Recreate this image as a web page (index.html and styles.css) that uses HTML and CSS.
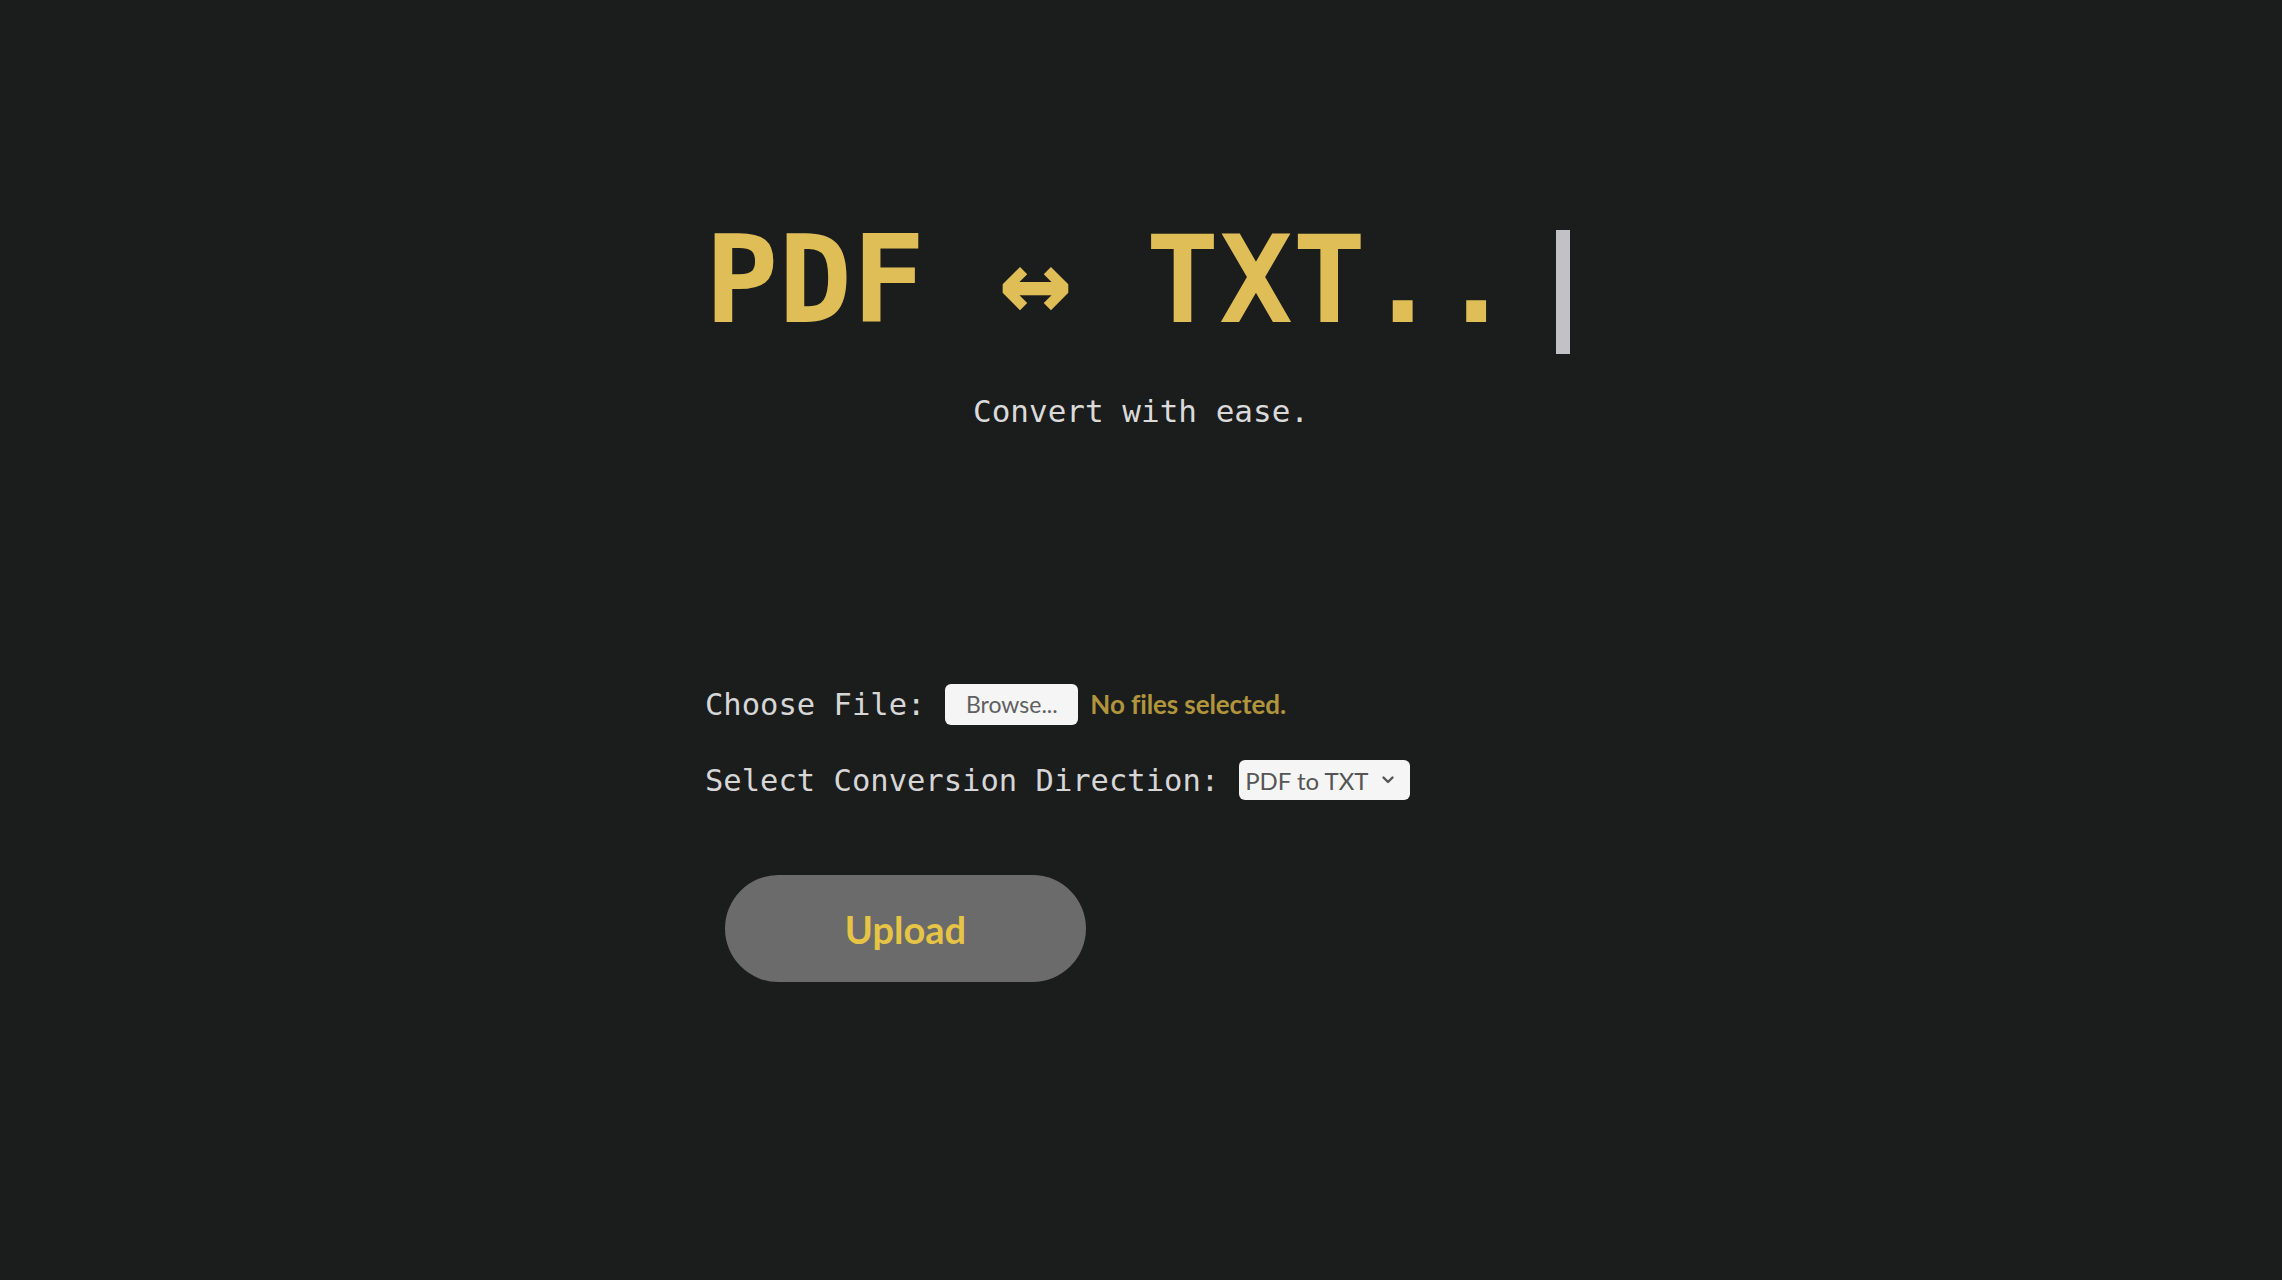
FILE: index.html
```html
<!DOCTYPE html>
<html lang="en">
<head>
<meta charset="utf-8">
<title>PDF ↔ TXT</title>
<link rel="stylesheet" href="styles.css">
</head>
<body>
<main class="page">
  <header class="hero">
    <h1 class="title"><span class="typed">PDF ↔ TXT..</span><span class="caret"></span></h1>
    <p class="tagline">Convert with ease.</p>
  </header>
  <form class="form">
    <div class="row">
      <span class="label">Choose File:</span>
      <span class="browse">Browse...</span>
      <span class="nofile">No files selected.</span>
    </div>
    <div class="row">
      <span class="label">Select Conversion Direction:</span>
      <span class="select">PDF to TXT
        <svg class="chev" viewBox="0 0 12 8" width="12" height="8"><path d="M1.5 1.5 L6 6 L10.5 1.5" fill="none" stroke="#555" stroke-width="2.4" stroke-linecap="round" stroke-linejoin="round"/></svg>
      </span>
    </div>
    <button type="button" class="upload">Upload</button>
  </form>
</main>
</body>
</html>
```
FILE: styles.css
```css
html, body {
  margin: 0;
  padding: 0;
  height: 100%;
}
body {
  background: #1b1c1c;
  font-family: "DejaVu Sans Mono", monospace;
  color: #d6d6d6;
}
.page {
  width: 872px;
  margin: 0 auto;
  padding-top: 219px;
}
.hero {
  text-align: center;
}
.title {
  margin: 0;
  padding-right: 7px;
  font-size: 122px;
  line-height: 1;
  font-weight: bold;
  color: #dfbe58;
  white-space: nowrap;
}
.typed {
  display: inline-block;
}
.caret {
  display: inline-block;
  width: 14px;
  height: 124px;
  margin-left: 43px;
  vertical-align: -32px;
  background: #c2c2c6;
}
.tagline {
  margin: 39px 0 0;
  font-size: 31px;
  line-height: 36px;
  color: #dadada;
}
.form {
  margin-top: 254px;
  display: flex;
  flex-direction: column;
  align-items: flex-start;
}
.row {
  display: flex;
  align-items: center;
  height: 42px;
  margin-bottom: 34px;
}
.label {
  font-size: 30.5px;
  color: #d6d6d6;
  white-space: pre;
  margin-right: 20px;
}
.browse {
  box-sizing: border-box;
  width: 133px;
  height: 41px;
  background: #f5f5f5;
  border-radius: 6px;
  font-family: Lato, "Open Sans", sans-serif;
  font-size: 23px;
  color: #606060;
  display: flex;
  align-items: center;
  justify-content: center;
}
.nofile {
  margin-left: 12px;
  font-family: Lato, "Open Sans", sans-serif;
  font-size: 26px;
  color: #b0953c;
  font-weight: bold;
  letter-spacing: -0.1px;
}
.select {
  box-sizing: border-box;
  width: 171px;
  height: 40px;
  background: #f5f5f5;
  border-radius: 6px;
  font-family: Lato, "Open Sans", sans-serif;
  font-size: 24px;
  color: #555;
  display: flex;
  align-items: center;
  padding-left: 6px;
  gap: 14px;
}
.chev {
  flex: none;
}
.upload {
  margin: 40px 0 0 20px;
  width: 361px;
  height: 107px;
  border: none;
  border-radius: 54px;
  background: #6b6b6b;
  color: #e6c446;
  font-family: Lato, "Open Sans", sans-serif;
  font-weight: bold;
  font-size: 38px;
  cursor: pointer;
}
```
